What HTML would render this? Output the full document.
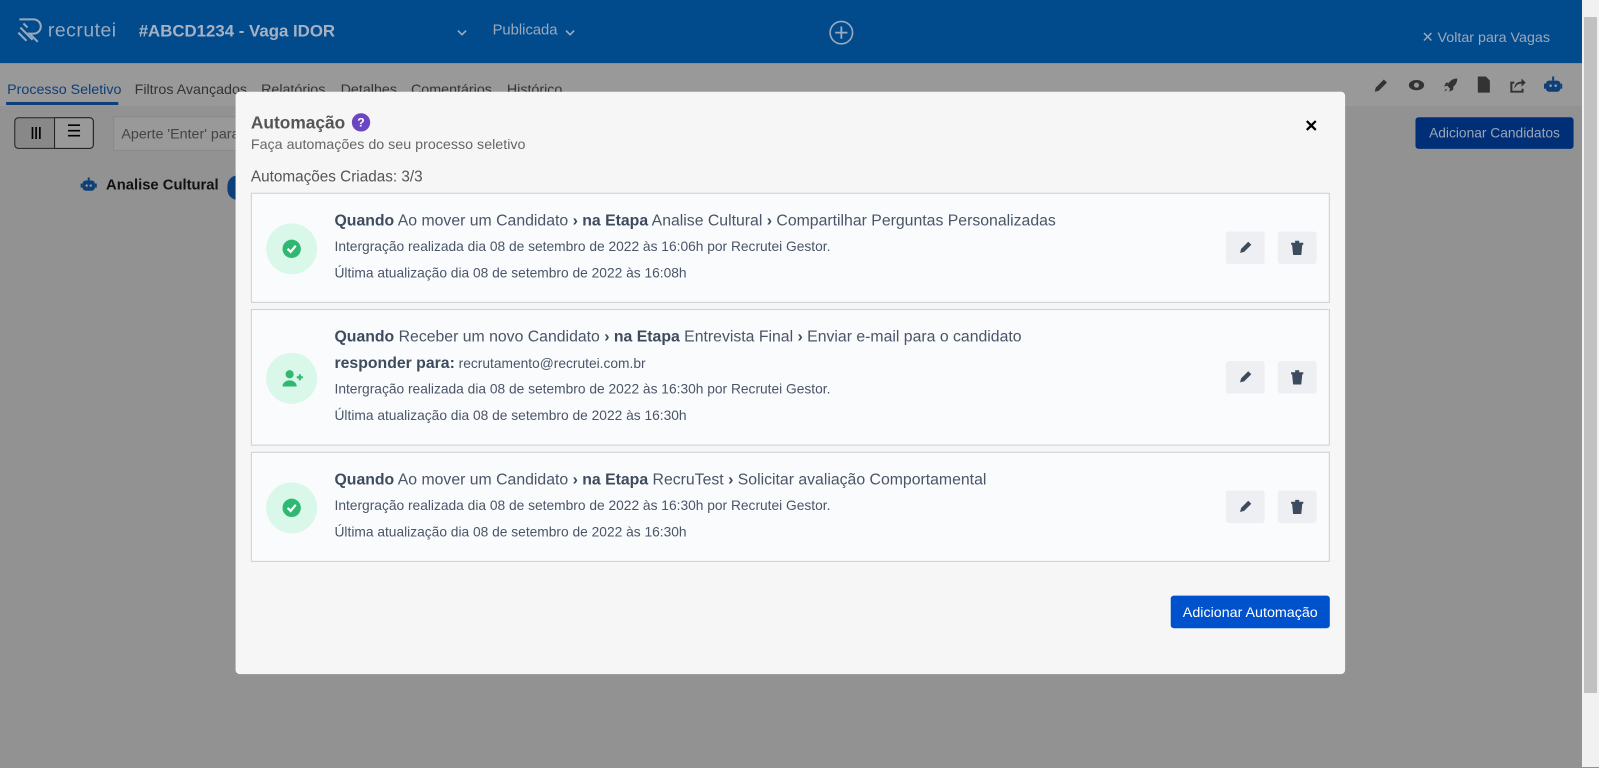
<!DOCTYPE html>
<html><head><meta charset="utf-8"><style>
*{box-sizing:border-box;margin:0;padding:0}
body{width:1599px;height:767px;overflow:hidden;font-family:"Liberation Sans",Arial,sans-serif;background:#929293;position:relative}
.wrap{position:absolute;left:0;top:0;width:1551px;height:753px;transform:scale(1.0198);transform-origin:0 0}
.hdr{position:absolute;left:0;top:0;width:1552px;height:62px;background:#014b8d;color:#9aa9bd}
.tabs{position:absolute;left:0;top:62px;width:1552px;height:42px;background:#999;color:#333;font-size:14px}
.tabs span{position:absolute;top:17px}
.sb{position:absolute;right:0;top:0;width:17px;height:767px;background:#f1f1f1}
.sb div{position:absolute;left:2px;top:17px;width:13px;height:676px;background:#c1c1c1}
.modal{position:absolute;left:231px;top:90px;width:1088px;height:571px;background:#f6f6f6;border-radius:4px}
.card{position:absolute;left:15px;width:1058px;background:#fafbfc;border:1px solid #cfcfcf;color:#3d4b5e}
.ic{position:absolute;left:14px;width:50px;height:50px;border-radius:50%;background:#d9f8ea}
.ic svg{position:absolute;left:15px;top:15px}
.l1{position:absolute;left:81px;font-size:15.5px;color:#4a5568;white-space:nowrap}
.l1 b{color:#3d4b5e}
.sm{position:absolute;left:81px;font-size:13.5px;color:#4a5568;white-space:nowrap}
.btn{position:absolute;width:38px;height:32px;background:#eeeff3;border-radius:3px}
.btn svg{position:absolute;left:12px;top:9px}
</style></head><body>
<div class="wrap">
<div class="hdr">
 <svg style="position:absolute;left:17px;top:17px" width="30" height="26" viewBox="0 0 30 26" fill="none" stroke="#9aa9bd" stroke-width="2"><path d="M2 2h14a7 7 0 0 1 0 14h-4l8 8"/><path d="M3 10l12 12M1 15l8 8M6 6l4 4"/></svg>
 <span style="position:absolute;left:47px;top:20px;font-size:19px;letter-spacing:0.5px">recrutei</span>
 <span style="position:absolute;left:136px;top:22px;font-size:16.5px;font-weight:bold;color:#a6b2c4">#ABCD1234 - Vaga IDOR</span>
 <svg style="position:absolute;left:448px;top:29px" width="10" height="6"><path d="M1 1l4 4 4-4" stroke="#9aa9bd" stroke-width="1.6" fill="none"/></svg>
 <span style="position:absolute;left:483px;top:22px;font-size:14.5px">Publicada</span>
 <svg style="position:absolute;left:554px;top:29px" width="10" height="6"><path d="M1 1l4 4 4-4" stroke="#9aa9bd" stroke-width="1.6" fill="none"/></svg>
 <svg style="position:absolute;left:812px;top:19px" width="26" height="26"><circle cx="13" cy="13" r="11" stroke="#9aa9bd" stroke-width="1.6" fill="none"/><path d="M13 7v12M7 13h12" stroke="#9aa9bd" stroke-width="1.8"/></svg>
 <span style="position:absolute;left:1394px;top:28px;font-size:14px">✕ Voltar para Vagas</span>
</div>
<div class="tabs">
 <span style="left:7px;color:#0f3f78">Processo Seletivo</span>
 <div style="position:absolute;left:6px;top:38px;width:110px;height:3px;background:#0f3f78"></div>
 <span style="left:132px">Filtros Avançados</span><span style="left:256px">Relatórios</span><span style="left:334px">Detalhes</span><span style="left:403px">Comentários</span><span style="left:497px">Histórico</span>
 <svg style="position:absolute;left:1347px;top:14px" width="15" height="15"><path d="M1 14l1-4 8-8 3 3-8 8z" fill="#333"/></svg>
 <svg style="position:absolute;left:1381px;top:16px" width="16" height="11"><ellipse cx="8" cy="5.5" rx="7.5" ry="5" fill="#333"/><circle cx="8" cy="5.5" r="2.5" fill="#999"/></svg>
 <svg style="position:absolute;left:1415px;top:14px" width="15" height="15"><path d="M14 1c-5 0-8 3-10 7l3 3c4-2 7-5 7-10zM4 8L1 9l2-4 3 0zM7 11l-1 3 4-2 0-3zM3 11l-2 3 3-2z" fill="#333"/></svg>
 <svg style="position:absolute;left:1449px;top:13px" width="12" height="16"><path d="M0 0h8l4 4v12H0z" fill="#333"/></svg>
 <svg style="position:absolute;left:1480px;top:14px" width="16" height="15"><path d="M1 4h4v2H3v7h9v-2h2v4H1z" fill="#333"/><path d="M5 11c0-5 3-7 7-7V1l4 4-4 4V6c-3 0-5 1-7 5z" fill="#333"/></svg>
 <svg style="position:absolute;left:1514px;top:13px" width="18" height="16"><rect x="2" y="4" width="14" height="11" rx="3" fill="#0f3f78"/><rect x="0" y="7" width="2" height="5" fill="#0f3f78"/><rect x="16" y="7" width="2" height="5" fill="#0f3f78"/><rect x="8" y="0" width="2" height="4" fill="#0f3f78"/><circle cx="6.5" cy="9" r="1.3" fill="#999"/><circle cx="11.5" cy="9" r="1.3" fill="#999"/></svg>
</div>
<div style="position:absolute;left:14px;top:115px;width:78px;height:31px;border:1px solid #222;border-radius:4px;background:#888"></div>
<div style="position:absolute;left:53px;top:115px;width:39px;height:31px;border:1px solid #222;border-radius:0 4px 4px 0;background:#999;text-align:center;line-height:28px;font-size:16px">☰</div>
<div style="position:absolute;left:30px;top:122px;font-weight:bold;font-size:13px">|||</div>
<div style="position:absolute;left:111px;top:114px;width:130px;height:34px;border:1px solid #888;background:#999;font-size:14px;color:#444;padding:8px 7px;white-space:nowrap;overflow:hidden">Aperte 'Enter' para</div>
<div style="position:absolute;left:1388px;top:115px;width:155px;height:31px;background:#012f77;border-radius:3px;color:#9aa5b7;font-size:13.5px;text-align:center;line-height:31px">Adicionar Candidatos</div>
<svg style="position:absolute;left:79px;top:174px" width="16" height="14"><rect x="2" y="3" width="12" height="10" rx="3" fill="#0f3f78"/><rect x="0" y="6" width="2" height="4" fill="#0f3f78"/><rect x="14" y="6" width="2" height="4" fill="#0f3f78"/><rect x="7" y="0" width="2" height="3" fill="#0f3f78"/><circle cx="6" cy="8" r="1.2" fill="#999"/><circle cx="10" cy="8" r="1.2" fill="#999"/></svg>
<div style="position:absolute;left:104px;top:174px;font-weight:bold;font-size:14.5px;color:#111">Analise Cultural</div>
<div style="position:absolute;left:223px;top:172px;width:20px;height:24px;border-radius:12px;background:#0f3f78"></div>

<div class="modal">
 <div style="position:absolute;left:15px;top:21px;font-size:17px;font-weight:bold;color:#555">Automação</div>
 <div style="position:absolute;left:114px;top:21px;width:18px;height:18px;border-radius:50%;background:#6b46c1;color:#fff;font-size:12px;font-weight:bold;text-align:center;line-height:18px">?</div>
 <div style="position:absolute;left:15px;top:43px;font-size:14px;color:#666">Faça automações do seu processo seletivo</div>
 <div style="position:absolute;left:1048px;top:24px;font-size:16px;font-weight:bold">✕</div>
 <div style="position:absolute;left:15px;top:75px;font-size:15px;color:#555">Automações Criadas: 3/3</div>

 <div class="card" style="top:99px;height:108px">
  <div class="ic" style="top:29px"><svg width="20" height="20"><circle cx="10" cy="10" r="9" fill="#2fb872"/><path d="M6 10l3 3 5-6" stroke="#fff" stroke-width="2.2" fill="none"/></svg></div>
  <div class="l1" style="top:18px"><b>Quando</b> Ao mover um Candidato <b>›&nbsp;na Etapa</b> Analise Cultural <b>›</b> Compartilhar Perguntas Personalizadas</div>
  <div class="sm" style="top:44px">Intergração realizada dia 08 de setembro de 2022 às 16:06h por Recrutei Gestor.</div>
  <div class="sm" style="top:70px">Última atualização dia 08 de setembro de 2022 às 16:08h</div>
  <div class="btn" style="left:955px;top:37px"><svg width="14" height="14"><path d="M2 12l1-4 7-7 3 3-7 7z" fill="#3d4b5e"/></svg></div>
  <div class="btn" style="left:1006px;top:37px"><svg width="14" height="14"><path d="M1 2h12v2H1zM5 0h4v2H5zM2 4h10l-1 10H3z" fill="#3d4b5e"/></svg></div>
 </div>

 <div class="card" style="top:213px;height:134px">
  <div class="ic" style="top:42px"><svg width="22" height="20"><circle cx="8" cy="6" r="4" fill="#2fb872"/><path d="M1 18a7 6 0 0 1 14 0z" fill="#2fb872"/><path d="M18 6v6M15 9h6" stroke="#2fb872" stroke-width="2"/></svg></div>
  <div class="l1" style="top:18px"><b>Quando</b> Receber um novo Candidato <b>›&nbsp;na Etapa</b> Entrevista Final <b>›</b> Enviar e-mail para o candidato</div>
  <div class="l1" style="top:44px;font-size:13.5px"><b style="font-size:15.5px">responder para:</b> recrutamento@recrutei.com.br</div>
  <div class="sm" style="top:70px">Intergração realizada dia 08 de setembro de 2022 às 16:30h por Recrutei Gestor.</div>
  <div class="sm" style="top:96px">Última atualização dia 08 de setembro de 2022 às 16:30h</div>
  <div class="btn" style="left:955px;top:50px"><svg width="14" height="14"><path d="M2 12l1-4 7-7 3 3-7 7z" fill="#3d4b5e"/></svg></div>
  <div class="btn" style="left:1006px;top:50px"><svg width="14" height="14"><path d="M1 2h12v2H1zM5 0h4v2H5zM2 4h10l-1 10H3z" fill="#3d4b5e"/></svg></div>
 </div>

 <div class="card" style="top:353px;height:108px">
  <div class="ic" style="top:29px"><svg width="20" height="20"><circle cx="10" cy="10" r="9" fill="#2fb872"/><path d="M6 10l3 3 5-6" stroke="#fff" stroke-width="2.2" fill="none"/></svg></div>
  <div class="l1" style="top:18px"><b>Quando</b> Ao mover um Candidato <b>›&nbsp;na Etapa</b> RecruTest <b>›</b> Solicitar avaliação Comportamental</div>
  <div class="sm" style="top:44px">Intergração realizada dia 08 de setembro de 2022 às 16:30h por Recrutei Gestor.</div>
  <div class="sm" style="top:70px">Última atualização dia 08 de setembro de 2022 às 16:30h</div>
  <div class="btn" style="left:955px;top:37px"><svg width="14" height="14"><path d="M2 12l1-4 7-7 3 3-7 7z" fill="#3d4b5e"/></svg></div>
  <div class="btn" style="left:1006px;top:37px"><svg width="14" height="14"><path d="M1 2h12v2H1zM5 0h4v2H5zM2 4h10l-1 10H3z" fill="#3d4b5e"/></svg></div>
 </div>

 <div style="position:absolute;left:917px;top:494px;width:156px;height:32px;background:#0052cc;border-radius:3px;color:#fff;font-size:14px;text-align:center;line-height:32px">Adicionar Automação</div>
</div>
</div>
<div class="sb"><div></div></div>
</body></html>
